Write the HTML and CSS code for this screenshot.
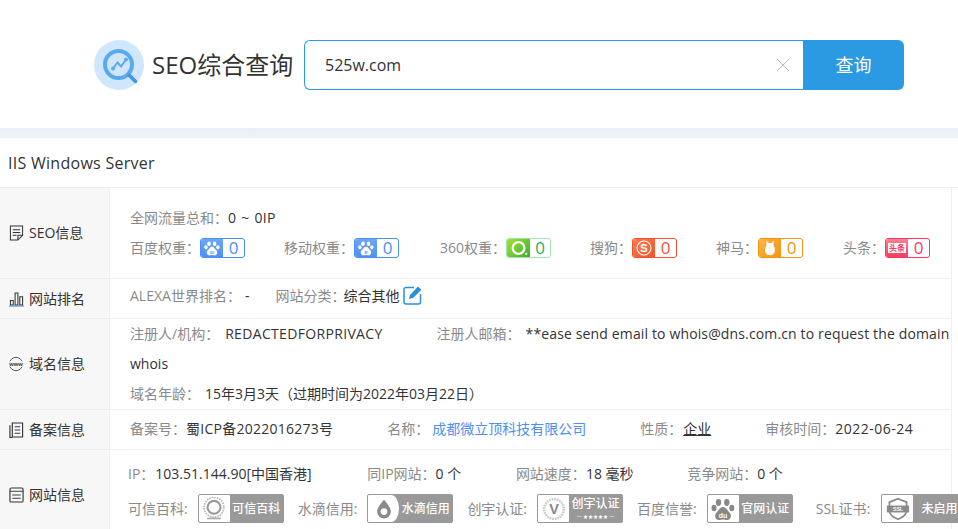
FILE: index.html
```html
<!DOCTYPE html>
<html lang="zh-CN">
<head>
<meta charset="utf-8">
<title>SEO综合查询</title>
<link rel="stylesheet" href="styles.css">
</head>
<body>
<svg class="defs" width="0" height="0">
  <symbol id="paw" viewBox="0 0 24 24">
    <ellipse cx="7.500" cy="5.500" rx="2.700" ry="3.400"/><ellipse cx="15.800" cy="5.500" rx="2.700" ry="3.400"/>
    <ellipse cx="3" cy="11" rx="2.500" ry="3.200"/><ellipse cx="20.800" cy="11" rx="2.500" ry="3.200"/>
    <path d="M12 10c-3 0-4 3-6.500 5.500C3 18 4 23 8 23c1.700 0 2.700-.6 4-.6s2.300.6 4 .6c4 0 5-5 2.500-7.500C16 13 15 10 12 10z"/>
  </symbol>
</svg>
<header class="top">
  <svg class="logo" viewBox="0 0 50 50">
    <circle cx="25" cy="25" r="25" fill="#cfe6fd"/>
    <circle cx="24.500" cy="24.500" r="13.500" fill="none" stroke="#58aaee" stroke-width="4"/>
    <path d="M35 35l6.500 6.500" stroke="#3f97e6" stroke-width="3.500" stroke-linecap="round"/>
    <path d="M19 28.500l4.500-6 3.500 4 5-7" fill="none" stroke="#58aaee" stroke-width="2"/>
    <circle cx="19" cy="28.500" r="2" fill="#58aaee"/><circle cx="32" cy="19.500" r="2" fill="#58aaee"/>
  </svg>
  <div class="brand">SEO综合查询</div>
  <div class="search">
    <div class="field">
      <span class="query">525w.com</span>
      <svg class="clear" viewBox="0 0 14 14"><path d="M1 1l12 12M13 1L1 13" stroke="#bdbdbd" stroke-width="1" fill="none"/></svg>
    </div>
    <div class="btn">查询</div>
  </div>
</header>
<div class="band"></div>
<div class="server">IIS Windows Server</div>
<main class="table">
  <section class="row row-seo">
    <div class="head">
      <svg class="ic" viewBox="0 0 16 18"><path d="M1.500 1.500h13v10l-5 5h-8zM4 5.500h8M4 8.500h8M4 11.500h4M9.500 16.500v-5h5" fill="none" stroke="#333" stroke-width="1.100"/></svg>
      <span>SEO信息</span>
    </div>
    <div class="cell">
      <div class="line line-flow"><span class="lb">全网流量总和：</span><span class="val flow">0 ~ 0IP</span></div>
      <div class="line ranks">
        <div class="rank"><span class="lb">百度权重：</span><span class="badge blue"><span class="bi"><svg viewBox="0 0 24 24"><use href="#paw"/><text x="12" y="20.500" class="pawt">GU</text></svg></span><span class="bn">0</span></span></div>
        <div class="rank"><span class="lb">移动权重：</span><span class="badge blue"><span class="bi"><svg viewBox="0 0 24 24"><use href="#paw"/><text x="12" y="20.500" class="pawt">M</text></svg></span><span class="bn">0</span></span></div>
        <div class="rank r360"><span class="lb">360权重：</span><span class="badge green"><span class="bi"><svg viewBox="0 0 22 20"><circle cx="10.500" cy="10" r="6.500" fill="none" stroke="#fff" stroke-width="2.500"/><circle cx="19" cy="16.500" r="1.200"/></svg></span><span class="bn">0</span></span></div>
        <div class="rank"><span class="lb">搜狗：</span><span class="badge red"><span class="bi"><svg viewBox="0 0 22 20"><circle cx="11" cy="10" r="7.800" fill="none" stroke="#fff" stroke-width="1.200"/><text x="11" y="14.500" class="sg">S</text></svg></span><span class="bn">0</span></span></div>
        <div class="rank"><span class="lb">神马：</span><span class="badge orange"><span class="bi"><svg viewBox="0 0 22 20"><path d="M7 2l2.500 2.500h3L15 2v6c2.500 2 2.500 10-4 10S4.500 10 7 8z"/></svg></span><span class="bn">0</span></span></div>
        <div class="rank rtt"><span class="lb">头条：</span><span class="badge pink"><span class="bi"><span class="tt">头条</span></span><span class="bn">0</span></span></div>
      </div>
    </div>
  </section>
  <section class="row row-rank">
    <div class="head">
      <svg class="ic" viewBox="0 0 16 18"><path d="M1.500 10.500h3v5h-3zM6.500 2.500h3v13h-3zM11.500 6.500h3v9h-3z" fill="none" stroke="#333" stroke-width="1.100"/><path d="M0 16.500h16" stroke="#3d7fd0"/></svg>
      <span>网站排名</span>
    </div>
    <div class="cell cell-inline cell-rank">
      <span class="lb">ALEXA世界排名：</span><span class="val dash">-</span>
      <span class="lb cat">网站分类：</span><span class="val">综合其他</span>
      <svg class="edit" viewBox="0 0 20 20"><path d="M11 2.500H3a2 2 0 0 0-2 2V17a2 2 0 0 0 2 2h12.500a2 2 0 0 0 2-2V9" fill="none" stroke="#2b8fe0" stroke-width="1.500"/><path d="M6 14l1-4 8-8.500 3.500 3.200-8.500 8.300z" fill="#2b8fe0"/></svg>
    </div>
  </section>
  <section class="row row-whois">
    <div class="head">
      <svg class="ic ic-www" viewBox="0 0 18 18"><circle cx="9" cy="9" r="7.500" fill="none" stroke="#444" stroke-width="1"/><rect x="0" y="6" width="18" height="6" fill="#f7f7f7"/><text x="9" y="11.500" class="www">www</text></svg>
      <span>域名信息</span>
    </div>
    <div class="cell cell-whois">
      <p class="wl"><span class="lb">注册人/机构：</span><span class="val owner">REDACTEDFORPRIVACY</span><span class="lb mail">注册人邮箱：</span><span class="val mailv">**ease send email to whois@dns.com.cn to request the domain</span></p>
      <p class="wl"><span class="val">whois</span></p>
      <p class="wl"><span class="lb">域名年龄：</span><span class="val age">15年3月3天（过期时间为2022年03月22日）</span></p>
    </div>
  </section>
  <section class="row row-icp">
    <div class="head">
      <svg class="ic" viewBox="0 0 16 18"><path d="M3.500 1.500h11v15h-11zM1 4v13h2.500" fill="none" stroke="#333" stroke-width="1.200"/><path d="M6 5.500h6M6 9h6M6 12.500h6" stroke="#333"/></svg>
      <span>备案信息</span>
    </div>
    <div class="cell cell-inline cell-icp">
      <span class="lb">备案号：</span><span class="val icp">蜀ICP备2022016273号</span>
      <span class="lb name">名称：</span><a class="link">成都微立顶科技有限公司</a>
      <span class="lb kind">性质：</span><span class="val und">企业</span>
      <span class="lb audit">审核时间：</span><span class="val date">2022-06-24</span>
    </div>
  </section>
  <section class="row row-site">
    <div class="head">
      <svg class="ic" viewBox="0 0 16 18"><rect x="1" y="1.500" width="14" height="15" rx="1.500" fill="none" stroke="#333" stroke-width="1.200"/><path d="M1 5h14M3.500 9h9M3.500 12.500h9" stroke="#333"/></svg>
      <span>网站信息</span>
    </div>
    <div class="cell cell-site">
      <div class="stats">
        <span class="lb">IP：</span><span class="val ipv">103.51.144.90[中国香港]</span>
        <span class="lb s1">同IP网站：</span><span class="val">0 个</span>
        <span class="lb s2">网站速度：</span><span class="val">18 毫秒</span>
        <span class="lb s3">竞争网站：</span><span class="val">0 个</span>
      </div>
      <div class="certs">
        <span class="lb">可信百科:</span>
        <span class="cert"><span class="ci"><svg viewBox="0 0 28 28"><circle cx="14" cy="12" r="7.500" fill="none" stroke="#999" stroke-width="2.500"/><circle cx="14" cy="12" r="11.500" fill="none" stroke="#bbb" stroke-width="2" stroke-dasharray="2 1"/><path d="M6 25h16" stroke="#aaa" stroke-width="2"/></svg></span><span class="ct">可信百科</span></span>
        <span class="lb">水滴信用:</span>
        <span class="cert"><span class="ci ci-arc"><svg viewBox="0 0 28 28"><path d="M14 3c5 7 8 10 8 14a8 8 0 0 1-16 0c0-4 3-7 8-14z" fill="#8a8a8a"/><circle cx="14" cy="17" r="4" fill="#fff"/></svg></span><span class="ct">水滴信用</span></span>
        <span class="lb">创宇认证:</span>
        <span class="cert"><span class="ci"><svg viewBox="0 0 28 28"><circle cx="14" cy="14" r="11.500" fill="none" stroke="#ccc" stroke-width="3" stroke-dasharray="2 1"/><text x="14" y="20" class="vv">V</text></svg></span><span class="ct two"><span class="ct1">创宇认证</span><span class="ct2">— ★★★★★ —</span></span></span>
        <span class="lb">百度信誉:</span>
        <span class="cert"><span class="ci"><svg viewBox="0 0 24 24" fill="#888"><use href="#paw"/><text x="12" y="20.500" class="dut">du</text></svg></span><span class="ct">官网认证</span></span>
        <span class="lb lb-ssl">SSL证书:</span>
        <span class="cert"><span class="ci"><svg viewBox="0 0 28 28"><path d="M14 2l10 4v10c0 5-5 8-10 10C9 24 4 21 4 16V6z" fill="none" stroke="#888" stroke-width="2"/><rect x="1" y="10" width="26" height="8" fill="#8a8a8a"/><text x="14" y="16.500" class="ssl">SSL</text></svg></span><span class="ct ct-off">未启用</span></span>
      </div>
    </div>
  </section>
</main>
</body>
</html>
```

FILE: styles.css
```css
* { box-sizing: border-box; }
html, body { margin: 0; height: 529px; overflow: hidden; background: #fff; }
body { width: 958px; font: 14px/20px "Open Sans", "Noto Sans CJK SC", sans-serif; color: #333; }
.defs { position: absolute; }
p { margin: 0; }

.top { height: 128px; padding: 40px 0 0 94px; display: flex; align-items: flex-start; }
.logo { width: 50px; height: 50px; flex: none; }
.brand { margin-left: 8px; width: 152px; font-size: 24px; line-height: 50px; color: #333; white-space: nowrap; }
.search { display: flex; height: 50px; }
.field { width: 499px; border: 1px solid #2c99e3; border-right: 0; border-radius: 6px 0 0 6px; display: flex; align-items: center; justify-content: space-between; padding: 0 13px 0 20px; }
.query { font-size: 16px; color: #333; }
.clear { width: 14px; height: 14px; }
.btn { width: 101px; background: #2c99e3; color: #fff; font-size: 18px; line-height: 50px; text-align: center; border-radius: 0 6px 6px 0; }

.band { height: 10px; background: linear-gradient(#e8eff7, #eef3f9); }
.server { height: 50px; padding: 14px 0 0 8px; font-size: 16px; line-height: 22px; letter-spacing: .28px; color: #333; border-bottom: 1px solid #eee; }

.table { width: 952px; border-right: 1px solid #eee; }
.row { display: flex; border-bottom: 1px solid #eee; }
.row-seo { height: 91px; }
.row-rank { height: 40px; }
.row-whois { height: 91px; }
.row-icp { height: 40px; }
.row-site { height: 90px; border-bottom: 0; }
.head { flex: none; width: 110px; background: #f7f7f7; border-right: 1px solid #eee; display: flex; align-items: center; padding-left: 9px; gap: 5px; color: #333; font-size: 14px; white-space: nowrap; }
.ic { width: 15px; height: 18px; flex: none; }
.ic-www { width: 16px; margin-left: -1px; }
.www { font: 700 6.5px "Liberation Sans", sans-serif; text-anchor: middle; fill: #333; }

.cell { flex: 1; min-width: 0; padding-left: 20px; }
.lb { color: #8a8a8a; white-space: nowrap; }
.val { color: #333; }
.cell-inline { display: flex; align-items: center; white-space: nowrap; }
.flow { letter-spacing: .3px; word-spacing: 1px; }

.row-seo .cell { padding-top: 20px; }
.line-flow { height: 20px; }
.ranks { display: flex; gap: 39px; margin-top: 9px; height: 22px; align-items: center; }
.rank { display: flex; align-items: center; white-space: nowrap; }
.r360 { margin-left: 2px; }
.rtt { margin-left: 1px; }
.badge { width: 45px; height: 20px; border: 1px solid; border-radius: 3px; display: flex; background: #fff; }
.bi { width: 22px; flex: none; display: flex; align-items: center; justify-content: center; border-radius: 2px 0 0 2px; }
.bi svg { width: 22px; height: 18px; fill: #fff; }
.blue .bi svg { width: 16px; height: 16px; }
.bn { flex: 1; text-align: center; font-size: 17px; line-height: 18px; }
.pawt { font: 700 5px "Liberation Sans", sans-serif; text-anchor: middle; fill: #4d90f5; }
.blue { border-color: #4d90f5; color: #4d90f5; }
.blue .bi { background: linear-gradient(#6ea6f7, #4d90f5); }
.green { border-color: #a4e3b6; color: #2aaf5c; }
.green .bi { background: linear-gradient(135deg, #a6e22d, #3cae32); width: 23px; }
.red { border-color: #f4522e; color: #f4522e; }
.red .bi { background: linear-gradient(135deg, #fb7d4e, #f4522e); }
.sg { font: 700 13px "Liberation Sans", sans-serif; text-anchor: middle; fill: #fff; }
.orange { border-color: #f6930e; color: #f6930e; }
.orange .bi { background: linear-gradient(135deg, #fbb54e, #f6930e); }
.pink { border-color: #f93a5f; color: #f93a5f; }
.pink .bi { background: linear-gradient(#fb8296, #f93a5f); }
.tt { background: #fff; color: #f93a5f; font-size: 8px; line-height: 10px; padding: 0 1px; font-weight: 700; }

.cell-rank { padding-bottom: 5px; }
.dash { margin-left: 4px; }
.cat { margin-left: 26px; margin-right: -2px; }
.edit { width: 20px; height: 20px; margin-left: 4px; margin-top: -2px; }

.wl { line-height: 30px; white-space: nowrap; }
.owner { margin-left: 6px; letter-spacing: .33px; }
.mail { margin-left: 54px; }
.mailv { margin-left: 5px; letter-spacing: .14px; }
.age { margin-left: 5px; }

.cell-icp { padding-bottom: 2px; }
.icp { letter-spacing: .25px; }
.name { margin-left: 54px; }
.link { color: #4d90f5; margin-left: 3px; }
.kind { margin-left: 54px; margin-right: 1px; }
.und { text-decoration: underline; }
.audit { margin-left: 54px; }
.date { letter-spacing: .5px; }

.cell-site { padding-left: 18px; }
.stats { padding-top: 14px; height: 44px; white-space: nowrap; }
.ipv { margin-left: 1px; }
.s1 { margin-left: 52px; }
.s2 { margin-left: 51px; }
.s3 { margin-left: 50px; }
.certs { display: flex; align-items: center; white-space: nowrap; }
.certs .lb { margin-right: 10px; margin-left: 14px; }
.certs .lb:first-child { margin-left: 0; }
.certs .lb-ssl { margin-left: 23px; margin-right: 11px; }
.cert { flex: none; width: 86px; height: 29px; background: #999; border-radius: 2px; border: 1px solid #999; display: flex; }
.ci { flex: none; width: 31px; background: #fff; border-radius: 1px; display: flex; align-items: center; justify-content: center; }
.ci-arc { border-radius: 1px 8px 8px 1px / 1px 14px 14px 1px; }
.ci svg { width: 24px; height: 24px; }
.ct { flex: 1; color: #fff; font-size: 12px; line-height: 27px; text-align: center; font-weight: 500; }
.two { display: flex; flex-direction: column; line-height: 13px; padding-top: 1px; }
.ct1 { font-size: 12px; line-height: 15px; }
.ct2 { font-size: 5px; line-height: 10px; }
.ssl { font: 700 6px "Liberation Sans", sans-serif; text-anchor: middle; fill: #fff; }
.vv { font: 700 17px "Liberation Sans", sans-serif; text-anchor: middle; fill: #888; }
.dut { font: 700 7px "Liberation Sans", sans-serif; text-anchor: middle; fill: #fff; }
```
